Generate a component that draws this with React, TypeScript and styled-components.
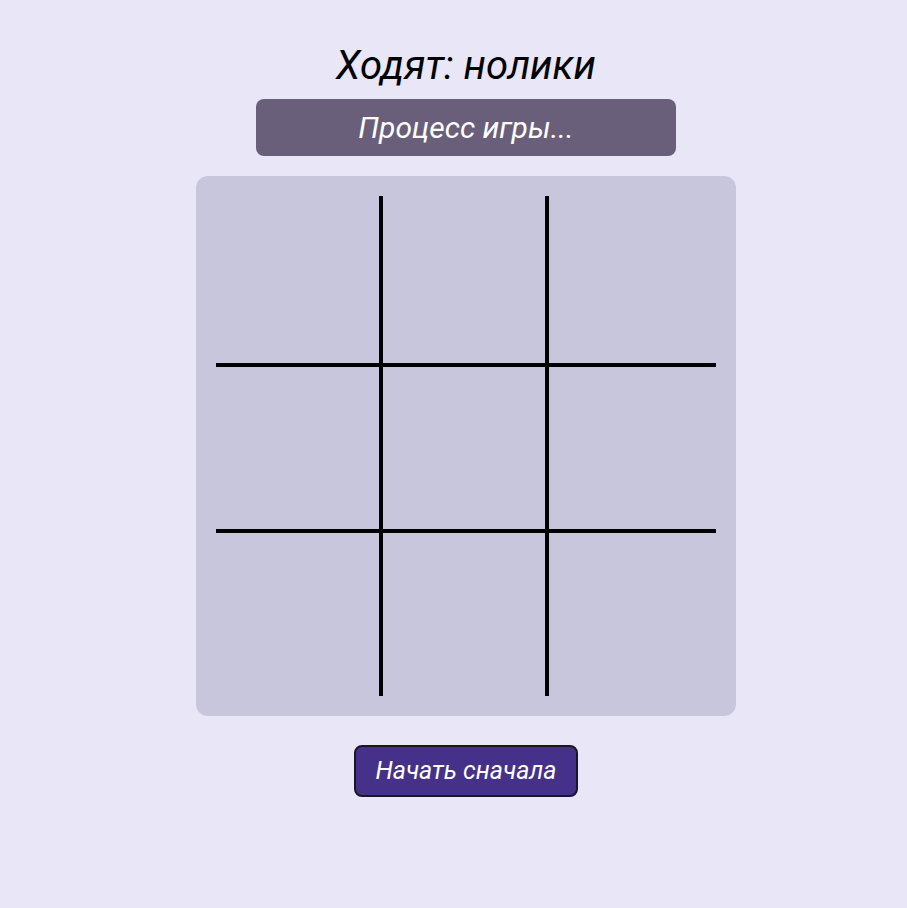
import React from "react";
import styled, { createGlobalStyle } from "styled-components";

const Global = createGlobalStyle`
  html, body {
    margin: 0;
    padding: 0;
    background: #e9e6f7;
    font-family: Roboto, "Liberation Sans", sans-serif;
  }
`;

const Page = styled.div`
  min-height: 908px;
  box-sizing: border-box;
  padding: 43px 0 0 25px;
  display: flex;
  flex-direction: column;
  align-items: center;
`;

const Title = styled.h1`
  margin: 0;
  font-size: 40px;
  font-weight: 400;
  font-style: italic;
  line-height: 46px;
  height: 44px;
  color: #000;
`;

const Status = styled.div`
  margin-top: 12px;
  width: 420px;
  height: 57px;
  box-sizing: border-box;
  padding: 11px 0;
  border-radius: 8px;
  background: #6a5f7a;
  color: #fff;
  font-size: 30px;
  font-style: italic;
  line-height: 35px;
  text-align: center;
`;

const Board = styled.div`
  margin-top: 20px;
  width: 540px;
  height: 540px;
  box-sizing: border-box;
  padding: 20px;
  border-radius: 12px;
  background: #c8c6dd;
  display: grid;
  grid-template-columns: 167px 166px 167px;
  grid-template-rows: 167px 166px 167px;
`;

const Cell = styled.div<{ $col: number; $row: number }>`
  box-sizing: border-box;
  border-right: ${(p) => (p.$col < 2 ? "4px solid #000" : "none")};
  border-top: ${(p) => (p.$row > 0 ? "4px solid #000" : "none")};
`;

const Restart = styled.button`
  margin-top: 29px;
  height: 52px;
  box-sizing: border-box;
  padding: 10px 19px;
  border: 2px solid #1a1626;
  border-radius: 8px;
  background: #46318a;
  color: #fff;
  font-family: Roboto, "Liberation Sans", sans-serif;
  font-size: 25px;
  font-style: italic;
  line-height: 28px;
  cursor: pointer;
`;

export default function App() {
  const cells = [];
  for (let r = 0; r < 3; r++) {
    for (let c = 0; c < 3; c++) {
      cells.push(<Cell key={`${r}-${c}`} $row={r} $col={c} />);
    }
  }
  return (
    <>
      <Global />
      <Page>
        <Title>Ходят: нолики</Title>
        <Status>Процесс игры...</Status>
        <Board>{cells}</Board>
        <Restart>Начать сначала</Restart>
      </Page>
    </>
  );
}
